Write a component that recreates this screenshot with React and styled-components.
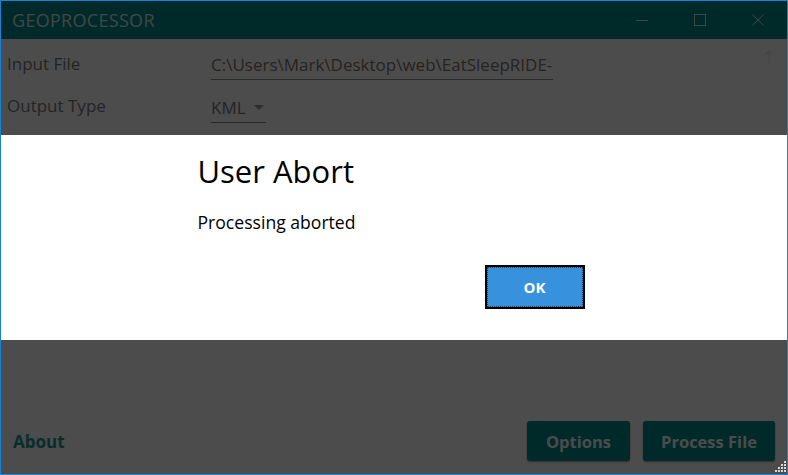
import React from 'react';
import styled, { createGlobalStyle } from 'styled-components';

const GlobalStyle = createGlobalStyle`
    html, body {
        margin: 0;
        padding: 0;
        background: #ffffff;
    }
    * {
        box-sizing: border-box;
    }
`

const App = () => {
    return (
        <>
            <GlobalStyle />
            <Window>
                <TitleBar>
                    <Title>GEOPROCESSOR</Title>
                    <Controls>
                        <ControlButton>
                            <svg width="12" height="12" viewBox="0 0 12 12">
                                <path d="M0 6.5H12" stroke="currentColor" strokeWidth="1" />
                            </svg>
                        </ControlButton>
                        <ControlButton>
                            <svg width="12" height="12" viewBox="0 0 12 12">
                                <rect x="0.5" y="0.5" width="11" height="11" fill="none" stroke="currentColor" strokeWidth="1" />
                            </svg>
                        </ControlButton>
                        <ControlButton>
                            <svg width="12" height="12" viewBox="0 0 12 12">
                                <path d="M0.5 0.5L11.5 11.5M11.5 0.5L0.5 11.5" stroke="currentColor" strokeWidth="1" />
                            </svg>
                        </ControlButton>
                    </Controls>
                </TitleBar>
                <Body>
                    <Form>
                        <Label>Input File</Label>
                        <TextField>C:\Users\Mark\Desktop\web\EatSleepRIDE-Cycling-Log.gpx</TextField>
                        <ScrollUp>
                            <svg width="10" height="14" viewBox="0 0 10 14">
                                <path d="M5 1V14M1 5L5 1L9 5" fill="none" stroke="currentColor" strokeWidth="1.5" />
                            </svg>
                        </ScrollUp>
                        <Label>Output Type</Label>
                        <Select>
                            KML
                            <Caret />
                        </Select>
                    </Form>
                    <Footer>
                        <AboutLink>About</AboutLink>
                        <Actions>
                            <ActionButton width={103}>Options</ActionButton>
                            <ActionButton width={132}>Process File</ActionButton>
                        </Actions>
                    </Footer>
                </Body>
                <Backdrop>
                    <Dialog>
                        <DialogContent>
                            <DialogTitle>User Abort</DialogTitle>
                            <DialogMessage>Processing aborted</DialogMessage>
                            <DialogButtons>
                                <OkButton>OK</OkButton>
                            </DialogButtons>
                        </DialogContent>
                    </Dialog>
                </Backdrop>
                <Grip>
                    <svg width="12" height="12" viewBox="0 0 12 12">
                        <path d="M10 0h2v2h-2zM7 3h2v2H7zM10 3h2v2h-2zM4 6h2v2H4zM7 6h2v2H7zM10 6h2v2h-2zM1 9h2v2H1zM4 9h2v2H4zM7 9h2v2H7zM10 9h2v2h-2z" fill="#d8d8d8" />
                    </svg>
                </Grip>
            </Window>
        </>
    )
}

export default App;

const Window = styled.div`
    position: relative;
    width: 788px;
    height: 475px;
    border: 1px solid #1883d7;
    display: flex;
    flex-direction: column;
    overflow: hidden;
    font-family: "Open Sans", "Noto Sans", sans-serif;
    background: #ffffff;
`

const TitleBar = styled.div`
    height: 38px;
    flex-shrink: 0;
    display: flex;
    align-items: center;
    background: #00898c;
`

const Title = styled.div`
    padding-left: 11px;
    font-size: 18px;
    color: #d9eded;
    letter-spacing: 0.3px;
`

const Controls = styled.div`
    margin-left: auto;
    display: flex;
    height: 100%;
`

const ControlButton = styled.div`
    width: 58px;
    height: 100%;
    display: flex;
    align-items: center;
    justify-content: center;
    color: #c4f0f0;
`

const Body = styled.div`
    flex: 1;
    display: flex;
    flex-direction: column;
    background: #ffffff;
`

const Form = styled.div`
    display: grid;
    grid-template-columns: 204px 342px 1fr;
    grid-auto-rows: 42px;
    align-items: center;
    padding: 3px 0 0 6px;
`

const Label = styled.div`
    font-size: 17px;
    color: #7a7a7a;
`

const TextField = styled.div`
    height: 30px;
    line-height: 29px;
    font-size: 17px;
    color: #7f7770;
    white-space: nowrap;
    overflow: hidden;
    border-bottom: 1px solid #919191;
    margin-top: 3px;
`

const ScrollUp = styled.div`
    align-self: start;
    justify-self: end;
    margin: 8px 13px 0 0;
    color: #e8e8e8;
    display: flex;
`

const Select = styled.div`
    grid-column: 2;
    width: 55px;
    height: 30px;
    line-height: 29px;
    margin-top: 5px;
    font-size: 17px;
    color: #7a7a7a;
    display: flex;
    align-items: center;
    justify-content: space-between;
    border-bottom: 1px solid #919191;
`

const Caret = styled.span`
    width: 0;
    height: 0;
    margin-right: 2px;
    border-left: 5px solid transparent;
    border-right: 5px solid transparent;
    border-top: 5px solid #9a9a9a;
`

const Footer = styled.div`
    margin-top: auto;
    display: flex;
    align-items: center;
    padding: 0 12px 13px 12px;
`

const AboutLink = styled.div`
    font-size: 17px;
    font-weight: 700;
    color: #1a9898;
`

const Actions = styled.div`
    margin-left: auto;
    display: flex;
    gap: 13px;
`

const ActionButton = styled.div`
    width: ${props => props.width}px;
    height: 40px;
    border-radius: 3px;
    background: #00898c;
    color: #f0ffff;
    font-size: 16.5px;
    font-weight: 700;
    display: flex;
    align-items: center;
    justify-content: center;
    box-shadow: 0 1px 2px rgba(0, 0, 0, 0.4);
`

const Backdrop = styled.div`
    position: absolute;
    inset: 0;
    background: rgba(0, 0, 0, 0.7);
    display: flex;
    align-items: center;
`

const Dialog = styled.div`
    width: 100%;
    height: 205px;
    background: #ffffff;
`

const DialogContent = styled.div`
    width: 50%;
    margin: 0 auto;
    padding: 15px 6px 0 0;
    display: flex;
    flex-direction: column;
`

const DialogTitle = styled.div`
    font-size: 31px;
    line-height: 42px;
    color: #000000;
`

const DialogMessage = styled.div`
    margin-top: 18px;
    font-size: 17.6px;
    line-height: 24px;
    color: #000000;
`

const DialogButtons = styled.div`
    margin-top: 31px;
    display: flex;
    justify-content: flex-end;
`

const OkButton = styled.div`
    position: relative;
    width: 100px;
    height: 44px;
    border: 2px solid #000000;
    background: #3891dd;
    color: #ffffff;
    font-size: 15px;
    font-weight: 700;
    display: flex;
    align-items: center;
    justify-content: center;

    &::after {
        content: "";
        position: absolute;
        inset: 0;
        border: 1px dotted #1a3c5a;
    }
`

const Grip = styled.div`
    position: absolute;
    right: 1px;
    bottom: 1px;
    display: flex;
`
